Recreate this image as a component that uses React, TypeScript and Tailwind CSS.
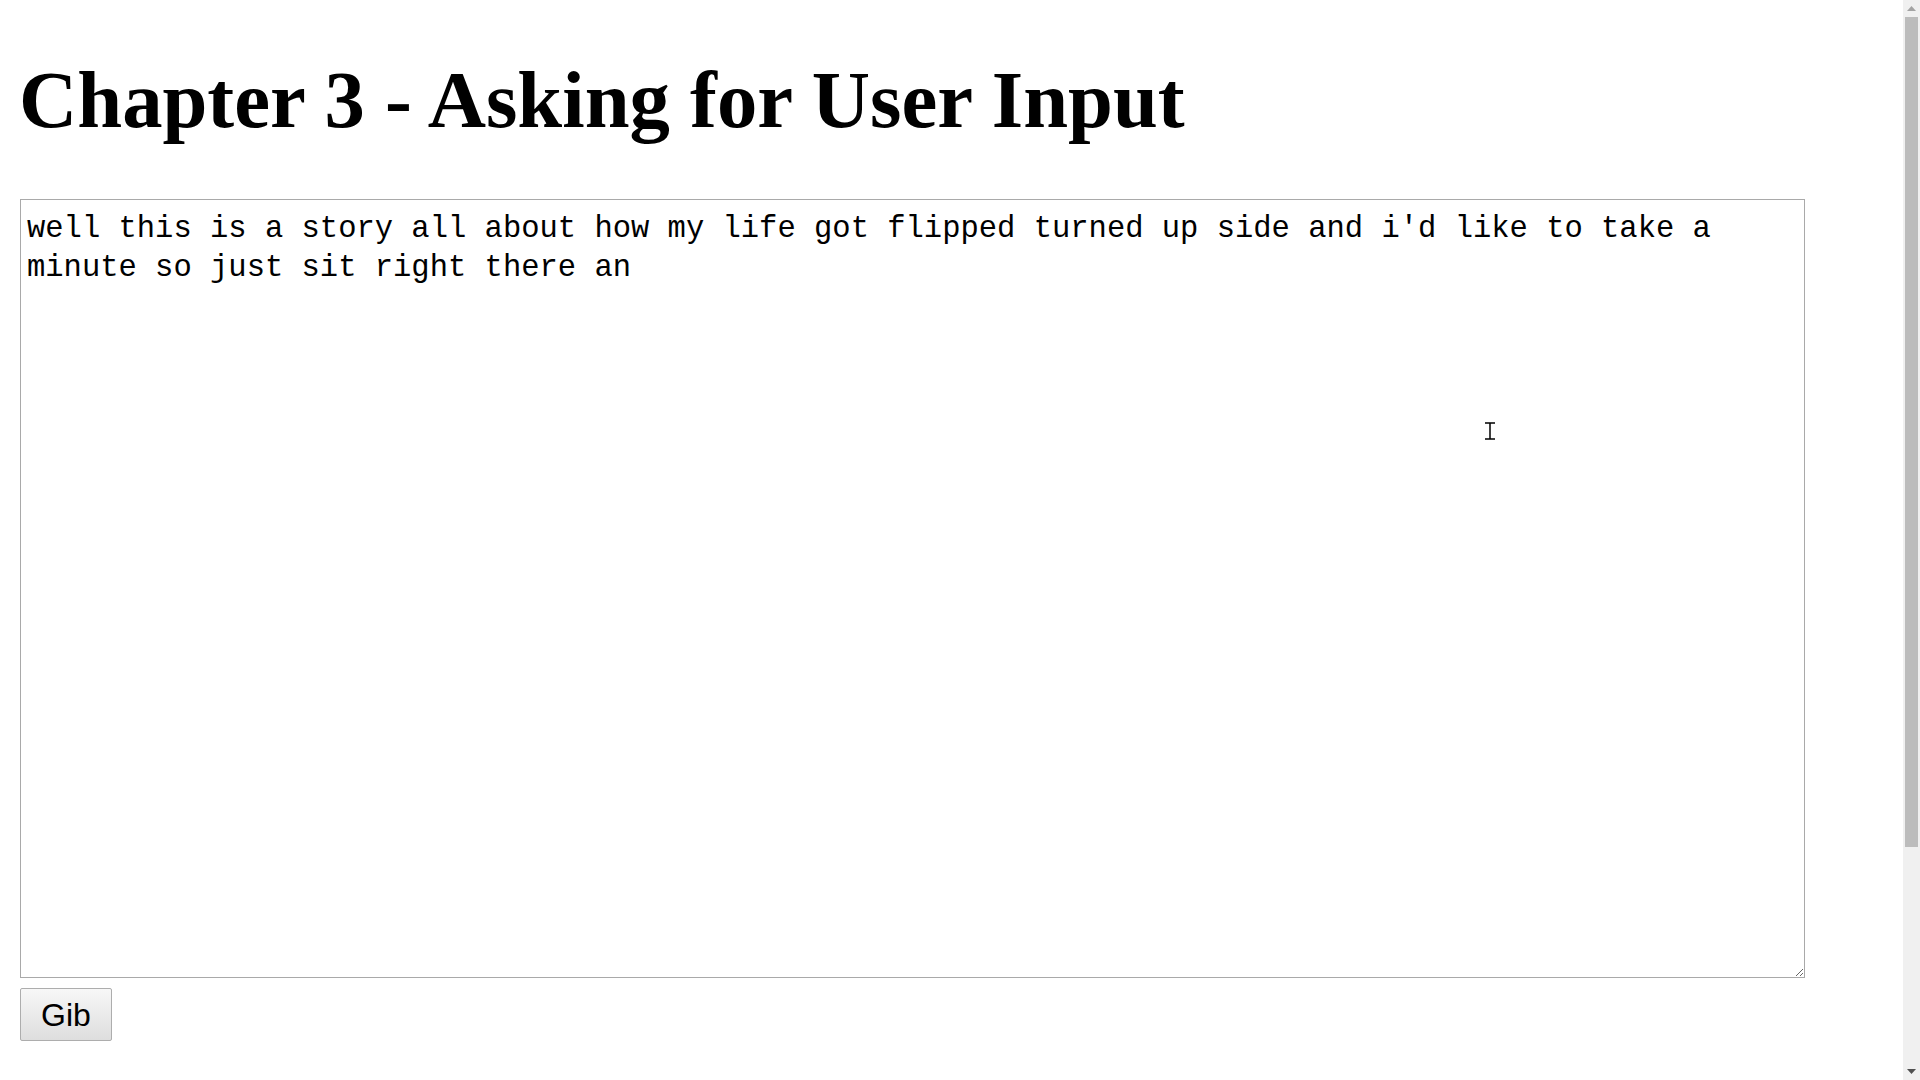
import { useState } from 'react';

export default function App() {
  const [text, setText] = useState(
    "well this is a story all about how my life got flipped turned up side and i'd like to take a minute so just sit right there an"
  );

  return (
    <div className="flex h-screen overflow-hidden bg-white text-black">
      <main className="relative min-w-0 flex-1">
        <h1 className="m-0 pt-[55px] pl-[19px] font-['Liberation_Serif',serif] text-[80.7px] font-bold leading-[89px]">
          Chapter 3 - Asking for User Input
        </h1>

        <div className="mt-[55px] pl-5">
          <textarea
            className="block h-[779px] w-[1785px] border border-[#a9a9a9] bg-white px-[6px] pt-[10px] font-['Liberation_Mono',monospace] text-[30.5px] leading-[39px] text-black outline-none"
            value={text}
            onChange={(e) => setText(e.target.value)}
          />
          <button className="mt-[10px] h-[53px] w-[92px] rounded-[2px] border border-[#adadad] bg-gradient-to-b from-[#f7f7f7] to-[#dedede] font-['Liberation_Sans',Arial,sans-serif] text-[32px] leading-none text-black">
            Gib
          </button>
        </div>

        {/* mouse cursor over the textarea */}
        <svg className="absolute left-[1484px] top-[422px]" width="12" height="18" viewBox="0 0 12 18">
          <path d="M1 1h3M8 1h3M6 1v16M1 17h3M8 17h3M4 1h4M4 17h4" stroke="#000" strokeWidth="1.5" fill="none" />
        </svg>
      </main>

      {/* window scrollbar */}
      <aside className="flex w-[17px] shrink-0 flex-col bg-[#f0f0f0]">
        <div className="flex h-[17px] items-center justify-center">
          <svg width="9" height="5" viewBox="0 0 9 5">
            <path d="M0 5 4.5 0 9 5Z" fill="#a3a3a3" />
          </svg>
        </div>
        <div className="flex-1 px-[2px]">
          <div className="h-[830px] bg-[#bcbcbc]" />
        </div>
        <div className="flex h-[17px] items-center justify-center">
          <svg width="9" height="5" viewBox="0 0 9 5">
            <path d="M0 0h9L4.5 5Z" fill="#505050" />
          </svg>
        </div>
      </aside>
    </div>
  );
}
